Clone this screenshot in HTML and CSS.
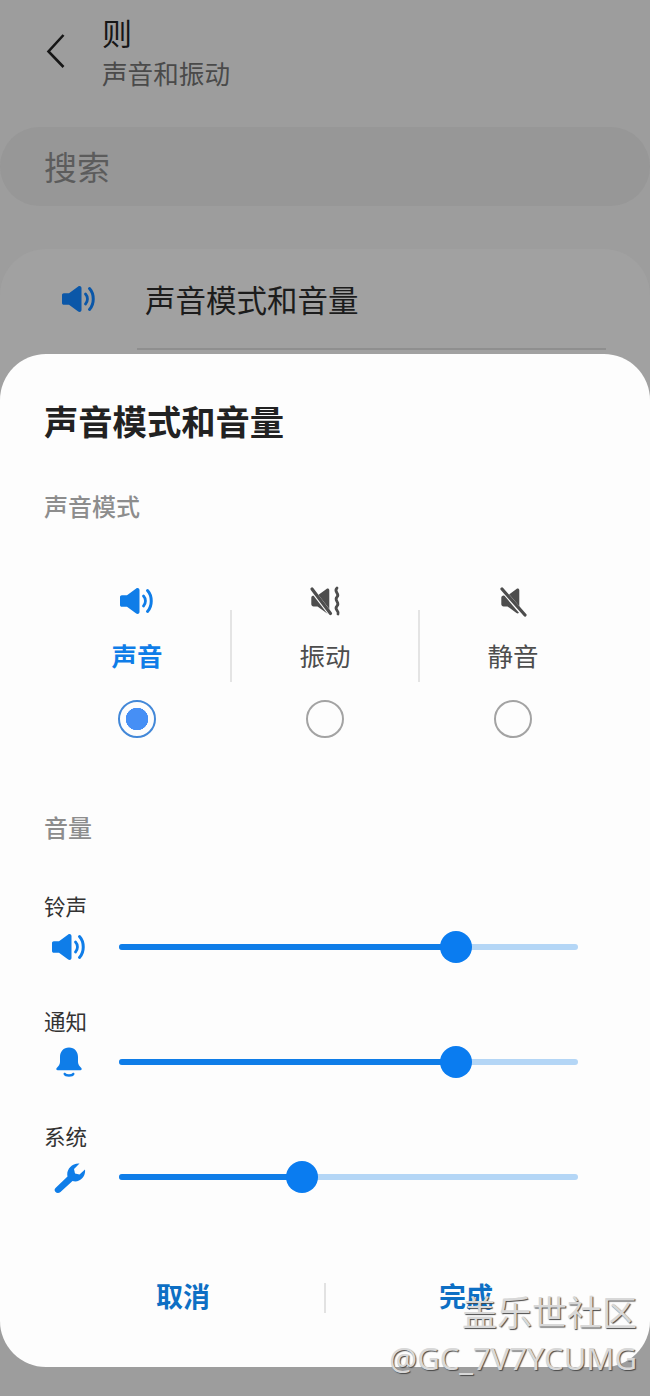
FILE: index.html
```html
<!DOCTYPE html>
<html lang="zh-CN">
<head>
<meta charset="utf-8">
<title>声音模式和音量</title>
<link rel="stylesheet" href="styles.css">
</head>
<body>
<svg class="defs" width="0" height="0" aria-hidden="true">
  <symbol id="speaker" viewBox="0 0 36 32">
    <path d="M1 12c0-1 .8-1.800 1.800-1.800H8L17.200 3.500c1.300-1 3.300-.2 3.300 1.500v22c0 1.700-2 2.500-3.300 1.500L8 21.800H2.800c-1 0-1.800-.8-1.800-1.800z" fill="currentColor"/>
    <path d="M24.500 11c2.600 2.800 2.600 7.200 0 10" fill="none" stroke="currentColor" stroke-width="2.800" stroke-linecap="round"/>
    <path d="M28.500 5.500c5 5.500 5 15.500 0 21" fill="none" stroke="currentColor" stroke-width="3" stroke-linecap="round"/>
  </symbol>
</svg>
<div class="screen">
  <header class="topbar">
    <svg class="back" viewBox="0 0 20 36"><path d="M17.500 2 2.500 18.500 17.500 34" fill="none" stroke="#161616" stroke-width="2.600"/></svg>
    <div class="heading">
      <div class="heading-title">则</div>
      <div class="heading-sub">声音和振动</div>
    </div>
  </header>
  <div class="search">搜索</div>
  <section class="card">
    <div class="card-row">
      <svg class="card-icon"><use href="#speaker"/></svg>
      <span class="card-label">声音模式和音量</span>
    </div>
    <div class="card-line"></div>
  </section>

  <section class="sheet">
    <h1 class="sheet-title">声音模式和音量</h1>
    <h2 class="group-title">声音模式</h2>
    <div class="modes">
      <div class="mode mode-on">
        <svg class="mode-icon"><use href="#speaker"/></svg>
        <div class="mode-name">声音</div>
        <div class="radio radio-on"></div>
      </div>
      <div class="mode">
        <svg class="mode-icon" viewBox="0 0 36 32">
          <path d="M6.500 10.500h4L19.500 4c1.200-.9 2.800-.1 2.800 1.300v21.400c0 1.400-1.600 2.200-2.800 1.300L10.500 21.500h-4c-1.200 0-2.200-1-2.200-2.200v-6.600c0-1.200 1-2.200 2.200-2.200z" fill="#4d4d4d"/>
          <path d="M3 2.500 25 31" stroke="#fdfdfd" stroke-width="4.500"/>
          <path d="M5 4 23.500 28.500" stroke="#4d4d4d" stroke-width="3.200" stroke-linecap="round"/>
          <path d="M30 3c-4 4 3.500 5.500 0 9s3.500 5.500 0 9 2.500 4.500 1 8" fill="none" stroke="#4d4d4d" stroke-width="2.800" stroke-linecap="round"/>
        </svg>
        <div class="mode-name">振动</div>
        <div class="radio"></div>
      </div>
      <div class="mode">
        <svg class="mode-icon" viewBox="0 0 36 32">
          <path d="M8.500 10.500h4L21.500 4c1.200-.9 2.800-.1 2.800 1.300v21.400c0 1.400-1.600 2.200-2.800 1.300l-9-6.500h-4c-1.200 0-2.200-1-2.200-2.200v-6.600c0-1.200 1-2.200 2.200-2.200z" fill="#4d4d4d"/>
          <path d="M5 2 30.500 32" stroke="#fdfdfd" stroke-width="4.500"/>
          <path d="M7 4 30 30" stroke="#4d4d4d" stroke-width="3.200" stroke-linecap="round"/>
        </svg>
        <div class="mode-name">静音</div>
        <div class="radio"></div>
      </div>
    </div>

    <h2 class="group-title group-volume">音量</h2>

    <div class="volume">
      <div class="volume-name">铃声</div>
      <div class="volume-row">
        <svg class="volume-icon"><use href="#speaker"/></svg>
        <div class="track"><div class="fill" style="width:73.4%"><span class="thumb"></span></div></div>
      </div>
    </div>
    <div class="volume">
      <div class="volume-name">通知</div>
      <div class="volume-row">
        <svg class="volume-icon" viewBox="0 0 36 32">
          <path d="M18 1.500c-5.600 0-9 4.200-9 9.500v5c0 2.200-1.400 4.200-3.300 6-.9.900-.3 2.300 1 2.300h22.600c1.300 0 1.900-1.400 1-2.300-1.900-1.800-3.300-3.800-3.300-6v-5c0-5.300-3.400-9.500-9-9.500z" fill="currentColor"/>
          <path d="M13.800 28c1 2 7.400 2 8.400 0" fill="none" stroke="currentColor" stroke-width="2.600" stroke-linecap="round"/>
        </svg>
        <div class="track"><div class="fill" style="width:73.4%"><span class="thumb"></span></div></div>
      </div>
    </div>
    <div class="volume">
      <div class="volume-name">系统</div>
      <div class="volume-row">
        <svg class="volume-icon" viewBox="0 0 36 32">
          <path d="M4.500 27 16.500 15.500c-1.500-6 3.500-13.500 12-13l-5.500 5.500 1 4.500 4.500 1 5.500-5c1 7.500-5.500 13.500-12.500 11.500L9.500 31c-3.500 2.800-7.800-1-5-4z" fill="currentColor"/>
        </svg>
        <div class="track"><div class="fill" style="width:39.9%"><span class="thumb"></span></div></div>
      </div>
    </div>

    <footer class="actions">
      <div class="action">取消</div>
      <div class="action-line"></div>
      <div class="action">完成</div>
    </footer>
  </section>

  <div class="mark">
    <div class="mark-name">盖乐世社区</div>
    <div class="mark-user">@GC_7V7YCUMG</div>
  </div>
</div>
</body>
</html>
```
FILE: styles.css
```css
* { box-sizing: border-box; }
html, body { margin: 0; padding: 0; }
body { font-family: "Noto Sans CJK SC", "Noto Sans", sans-serif; }
.defs { position: absolute; }
.screen {
  position: relative;
  width: 650px;
  height: 1396px;
  overflow: hidden;
  background: #9d9d9d;
}
.topbar {
  display: flex;
  align-items: flex-start;
  height: 127px;
  padding: 13px 0 0 46px;
}
.back { width: 20px; height: 36px; margin-top: 20px; flex: none; }
.heading { margin-left: 36px; }
.heading-title { font-size: 30px; line-height: 38px; color: #161616; }
.heading-sub { font-size: 25.6px; line-height: 38px; color: #4a4a4a; margin-top: 3px; }
.search {
  height: 79px;
  margin-bottom: 43px;
  padding-left: 44px;
  border-radius: 40px;
  background: #979797;
  color: #5c5c5c;
  font-size: 33px;
  line-height: 79px;
}
.card {
  height: 300px;
  border-radius: 46px 46px 0 0;
  background: #a1a1a1;
}
.card-row { display: flex; align-items: center; height: 100px; padding-left: 61px; }
.card-icon { width: 36px; height: 32px; color: #0b57a8; flex: none; }
.card-label { margin-left: 48px; font-size: 30.5px; color: #1c1c1c; }
.card-line { height: 2px; margin: -1px 44px 0 137px; background: #8f8f8f; }

.sheet {
  position: absolute;
  left: 0;
  top: 354px;
  width: 650px;
  height: 1013px;
  padding: 0 44px;
  border-radius: 46px;
  background: #fdfdfd;
}
.sheet-title {
  margin: 44px 0 0;
  font-size: 34.3px;
  line-height: 44px;
  font-weight: 700;
  color: #222;
}
.group-title {
  margin: 49px 0 0;
  font-size: 24px;
  line-height: 30px;
  font-weight: 500;
  color: #8d8d8d;
}
.modes { display: flex; margin: 64px 0 0 -1px; }
.mode {
  position: relative;
  flex: none;
  width: 188px;
  display: flex;
  flex-direction: column;
  align-items: center;
  color: #4d4d4d;
}
.mode + .mode::before {
  content: "";
  position: absolute;
  left: -1px;
  top: 25px;
  width: 2px;
  height: 72px;
  background: #e4e4e4;
}
.mode-on { color: #0f7de8; }
.mode-icon { width: 36px; height: 32px; flex: none; }
.mode-name { margin-top: 19px; font-size: 25.5px; line-height: 38px; }
.mode-on .mode-name { font-weight: 700; }
.radio {
  width: 38px;
  height: 38px;
  margin-top: 26px;
  border: 2px solid #a3a3a3;
  border-radius: 50%;
}
.radio-on {
  border-color: #4388d8;
  background: radial-gradient(circle, #468ff5 0 11px, transparent 11.5px);
}
.group-title.group-volume { margin-top: 74px; }
.volume { margin-bottom: 33px; }
.group-volume + .volume { margin-top: 50px; }
.volume-name { font-size: 21.5px; line-height: 28px; color: #333; }
.volume-row { display: flex; align-items: center; height: 54px; }
.volume-icon { width: 36px; height: 32px; margin-left: 7px; color: #0f7de8; flex: none; }
.track {
  position: relative;
  width: 459px;
  height: 6px;
  margin-left: 32px;
  border-radius: 3px;
  background: #b4d6f6;
}
.fill { position: relative; height: 6px; border-radius: 3px; background: #0f7de8; }
.thumb {
  position: absolute;
  right: -16px;
  top: -13px;
  width: 32px;
  height: 32px;
  border-radius: 50%;
  background: #0a7cf0;
}
.actions {
  display: flex;
  align-items: center;
  margin: 72px 0 0 -44px;
  width: 650px;
}
.action {
  flex: 1;
  text-align: center;
  font-size: 27px;
  line-height: 40px;
  padding-bottom: 4px;
  font-weight: 700;
  color: #0d6fc4;
}
.action:first-child { flex: none; width: 324px; padding-left: 42px; }
.action:last-child { padding-right: 44px; }
.action-line { width: 2px; height: 30px; background: #e2e2e2; flex: none; }
.mark {
  position: absolute;
  right: 13px;
  top: 1288px;
  text-align: right;
  color: #d8d8d8;
  text-shadow: 1px 1px 1px #4a4a4a;
}
.mark-name { font-size: 35px; line-height: 46px; font-weight: 400; }
.mark-user { font-size: 31px; line-height: 42px; margin-top: 3px; font-family: "Noto Sans", sans-serif; }
```
